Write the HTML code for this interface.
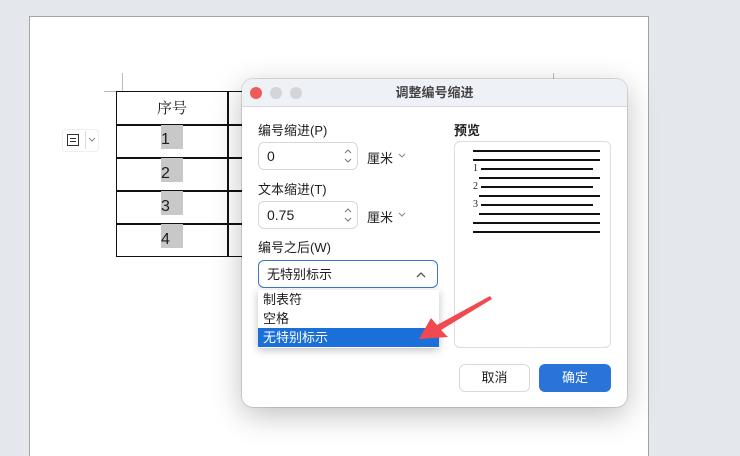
<!DOCTYPE html>
<html><head><meta charset="utf-8"><style>
*{margin:0;padding:0;box-sizing:border-box}
html,body{width:740px;height:456px;overflow:hidden}
body{background:#e4e7ec;position:relative;font-family:"Liberation Sans","Noto Sans CJK SC",sans-serif;color:#1d1d1f}
.a{position:absolute}
.page{left:29px;top:16px;width:620px;height:440px;background:#fff;border:1px solid #a4a4a4;border-bottom:none}
.num{position:absolute;font-size:16px;}
.hl{position:absolute;background:#c8c8c8;width:22px;height:24px}
.dlg{left:242px;top:79px;width:385px;height:328px;background:#fff;border-radius:11px;box-shadow:0 8px 30px rgba(0,0,0,.25),0 0 0 1px rgba(0,0,0,.12);overflow:hidden}
.tb{left:0;top:0;width:385px;height:28px;background:#eef1f6;border-bottom:1px solid #d6d8dc;text-align:center;font-size:13px;line-height:28px;color:#444;font-weight:bold}
.lbl{font-size:13px}
.inp{border:1px solid #d8d8d8;border-radius:6px;background:#fff;font-size:14px;padding-left:8px;line-height:27px}
.pl{position:absolute;height:1.5px;background:#111}
.pn{position:absolute;font-family:"Liberation Serif",serif;font-size:10px}
</style></head><body>
<div class="a page"></div>
<div class="a" style="left:122px;top:73px;width:1px;height:18px;background:#bbb"></div>
<div class="a" style="left:104px;top:91px;width:12px;height:1px;background:#bbb"></div>
<div class="a" style="left:553px;top:73px;width:1px;height:6px;background:#bbb"></div>
<div class="a" style="left:116px;top:91px;width:140px;height:166px;border:1.5px solid #111;border-right:none"></div>
<div class="a" style="left:227px;top:91px;width:1.5px;height:166px;background:#111"></div>
<div class="a" style="left:116px;top:124px;width:130px;height:1.5px;background:#111"></div>
<div class="a" style="left:116px;top:157px;width:130px;height:1.5px;background:#111"></div>
<div class="a" style="left:116px;top:190px;width:130px;height:1.5px;background:#111"></div>
<div class="a" style="left:116px;top:223px;width:130px;height:1.5px;background:#111"></div>
<div class="a" style="left:157px;top:97px;font-size:15px;font-family:'Noto Serif CJK SC',serif">序号</div>
<div class="hl" style="left:161px;top:125px"></div><div class="hl" style="left:161px;top:158px"></div><div class="hl" style="left:161px;top:191px"></div><div class="hl" style="left:161px;top:224px"></div>
<div class="num" style="left:161px;top:131px">1</div><div class="num" style="left:161px;top:165px">2</div><div class="num" style="left:161px;top:198px">3</div><div class="num" style="left:161px;top:231px">4</div>
<div class="a" style="left:62px;top:129px;width:37px;height:23px;border:1px solid #eee;border-radius:4px"></div>
<div class="a" style="left:67px;top:134px;width:12px;height:12px;border:1.2px solid #333"></div>
<div class="a" style="left:70px;top:138px;width:6px;height:4px;border-top:1px solid #333;border-bottom:1px solid #333"></div>
<div class="a" style="left:85px;top:131px;width:1px;height:18px;background:#ddd"></div>
<svg class="a" style="left:88px;top:137px" width="8" height="6"><path d="M1 1 L4 4 L7 1" fill="none" stroke="#888" stroke-width="1"/></svg>
<div class="a dlg">
 <div class="a tb">调整编号缩进</div>
 <div class="a" style="left:8px;top:8px;width:12px;height:12px;border-radius:50%;background:#ec5b55"></div>
 <div class="a" style="left:28px;top:8px;width:12px;height:12px;border-radius:50%;background:#d4d5d8"></div>
 <div class="a" style="left:48px;top:8px;width:12px;height:12px;border-radius:50%;background:#d4d5d8"></div>
 <div class="a lbl" style="left:16px;top:41px">编号缩进(P)</div>
 <div class="a inp" style="left:16px;top:63px;width:100px;height:28px">0</div>
 <svg class="a" style="left:101px;top:69px" width="10" height="16"><path d="M2 5 L5 2 L8 5 M2 11 L5 14 L8 11" fill="none" stroke="#777" stroke-width="1"/></svg>
 <div class="a lbl" style="left:125px;top:69px;font-size:13px">厘米</div>
 <svg class="a" style="left:156px;top:74px" width="8" height="6"><path d="M1 1 L4 4 L7 1" fill="none" stroke="#888" stroke-width="1"/></svg>
 <div class="a lbl" style="left:16px;top:100px">文本缩进(T)</div>
 <div class="a inp" style="left:16px;top:122px;width:100px;height:28px">0.75</div>
 <svg class="a" style="left:101px;top:128px" width="10" height="16"><path d="M2 5 L5 2 L8 5 M2 11 L5 14 L8 11" fill="none" stroke="#777" stroke-width="1"/></svg>
 <div class="a lbl" style="left:125px;top:128px;font-size:13px">厘米</div>
 <svg class="a" style="left:156px;top:133px" width="8" height="6"><path d="M1 1 L4 4 L7 1" fill="none" stroke="#888" stroke-width="1"/></svg>
 <div class="a lbl" style="left:16px;top:158px">编号之后(W)</div>
 <div class="a inp" style="left:16px;top:181px;width:180px;height:28px;border-color:#3a76cf;font-size:13px">无特别标示</div>
 <svg class="a" style="left:174px;top:192px" width="10" height="7"><path d="M1 6 L5 2 L9 6" fill="none" stroke="#555" stroke-width="1.3"/></svg>
 <div class="a" style="left:16px;top:211px;width:181px;height:58px;background:#fff;box-shadow:0 2px 8px rgba(0,0,0,.25);font-size:13px;line-height:19px">
  <div style="padding-left:5px">制表符</div><div style="padding-left:5px">空格</div><div style="padding-left:5px;background:#1a6fd8;color:#fff">无特别标示</div>
 </div>
 <div class="a lbl" style="left:212px;top:41px;font-weight:bold">预览</div>
 <div class="a" style="left:212px;top:62px;width:157px;height:207px;border:1px solid #ddd;border-radius:6px"></div>
</div>
<div class="pl" style="left:473px;top:150px;width:127px"></div>
<div class="pl" style="left:473px;top:159px;width:127px"></div>
<div class="pn" style="left:473px;top:163px">1</div><div class="pl" style="left:481px;top:168px;width:112px"></div>
<div class="pl" style="left:479px;top:177px;width:121px"></div>
<div class="pn" style="left:473px;top:181px">2</div><div class="pl" style="left:481px;top:186px;width:112px"></div>
<div class="pl" style="left:479px;top:195px;width:121px"></div>
<div class="pn" style="left:473px;top:199px">3</div><div class="pl" style="left:481px;top:204px;width:112px"></div>
<div class="pl" style="left:479px;top:213px;width:121px"></div>
<div class="pl" style="left:473px;top:222px;width:127px"></div>
<div class="pl" style="left:473px;top:231px;width:127px"></div>
<div class="a" style="left:459px;top:364px;width:71px;height:28px;border:1px solid #d8d8d8;border-radius:6px;text-align:center;line-height:26px;font-size:13px">取消</div>
<div class="a" style="left:539px;top:364px;width:72px;height:28px;background:#2a74d9;border-radius:6px;text-align:center;line-height:28px;font-size:13px;color:#fff">确定</div>
<svg class="a" style="left:0;top:0" width="740" height="456"><polygon points="419,339 431,318 437,325 490,296 492,299 441,330 448,337" fill="#f0494f"/></svg>
</body></html>
